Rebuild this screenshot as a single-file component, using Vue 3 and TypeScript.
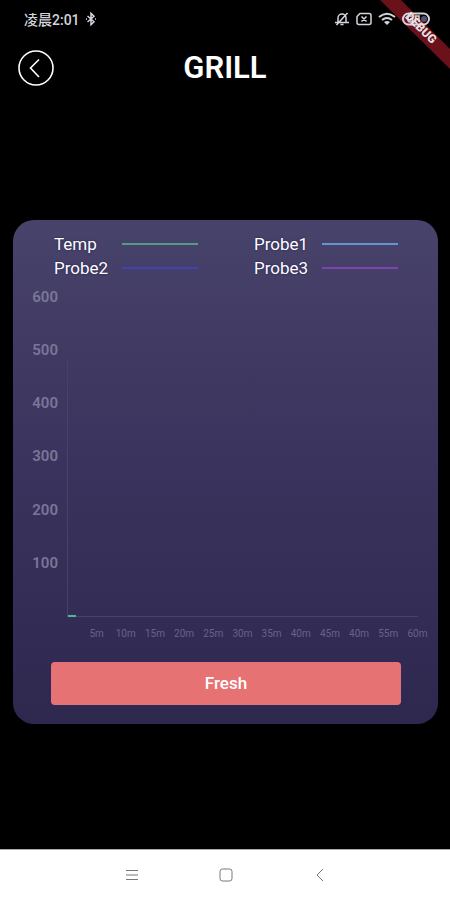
<script setup lang="ts">
interface Series {
  name: string
  tone: string
}

const series: Series[] = [
  { name: 'Temp', tone: 'green' },
  { name: 'Probe1', tone: 'sky' },
  { name: 'Probe2', tone: 'blue' },
  { name: 'Probe3', tone: 'purple' },
]

const temperatures: number[] = [600, 500, 400, 300, 200, 100]
const minutes: string[] = ['5m', '10m', '15m', '20m', '25m', '30m', '35m', '40m', '45m', '40m', '55m', '60m']
</script>

<template>
  <div class="screen">
    <svg class="ribbon" width="72" height="72" viewBox="0 0 72 72">
      <path d="M2 0h21l49 49v20z" />
    </svg>

    <div class="status">
      <div class="status-side time">
        <span>凌晨2:01</span>
        <svg width="12" height="14" viewBox="0 0 12 14">
          <path d="M2.500 4 9 9.700 6 12.700V1.300L9 4.300 2.500 10M1 7h1M10 7h1" />
        </svg>
      </div>
      <div class="status-side">
        <svg width="16" height="14" viewBox="0 0 16 14">
          <path d="M1 10.500h14M4 10V6a4 4 0 0 1 8 0v4M6.500 12.500h3M13.500 1 2.500 13" />
        </svg>
        <svg width="16" height="14" viewBox="0 0 16 14">
          <path d="M4 1.500h9a2 2 0 0 1 2 2v7a2 2 0 0 1-2 2H3a2 2 0 0 1-2-2V4.500zM5.500 4.500l5 5M10.500 4.500l-5 5" />
        </svg>
        <svg width="18" height="14" viewBox="0 0 18 14">
          <path class="wide" d="M1 5q8-6.500 16 0M4 8q5-4 10 0" />
          <path class="solid" d="M6 10q3-2 6 0l-3 3z" />
        </svg>
        <svg width="28" height="14" viewBox="0 0 28 14">
          <rect class="wide" x="1" y="1.500" width="26" height="11" rx="5.500" />
          <path d="M10.500 4H8A2 2 0 0 0 6 6v2a2 2 0 0 0 2 2h2.500V7H8M13.500 10V4h3.500v6M13.500 7H17" />
          <circle class="dot" cx="22" cy="7" r="3" />
        </svg>
      </div>
    </div>

    <svg class="ribbon" width="72" height="72" viewBox="0 0 72 72">
      <text x="43" y="28" transform="rotate(45 43 28)" text-anchor="middle" dominant-baseline="central">DEBUG</text>
    </svg>

    <header class="header">
      <button class="back" type="button" aria-label="Back">
        <svg width="36" height="36" viewBox="0 0 36 36">
          <circle cx="18" cy="18" r="17" />
          <path d="M21 9.500 12.500 18l8.500 9" />
        </svg>
      </button>
      <h1>GRILL</h1>
    </header>

    <main class="main">
      <section class="card">
        <ul class="legend">
          <li v-for="item in series" :key="item.name">
            <span class="name">{{ item.name }}</span>
            <span class="line" :class="item.tone"></span>
          </li>
        </ul>

        <div class="chart">
          <div class="y-axis">
            <span v-for="t in temperatures" :key="t">{{ t }}</span>
          </div>
          <div class="plot">
            <span class="reading"></span>
          </div>
        </div>
        <div class="x-axis">
          <span v-for="(m, i) in minutes" :key="i">{{ m }}</span>
        </div>

        <button class="fresh" type="button">Fresh</button>
      </section>
    </main>

    <nav class="nav">
      <button type="button" aria-label="Menu">
        <svg width="14" height="14" viewBox="0 0 14 14"><path d="M1 2.500h12M1 7h12M1 11.500h12" /></svg>
      </button>
      <button type="button" aria-label="Home">
        <svg width="14" height="14" viewBox="0 0 14 14"><rect x="1" y="1" width="12" height="12" rx="2.500" /></svg>
      </button>
      <button type="button" aria-label="Previous">
        <svg width="14" height="14" viewBox="0 0 14 14"><path d="M10 1 4 7l6 6" /></svg>
      </button>
    </nav>
  </div>
</template>

<style>
body {
  background: #000;
}
</style>

<style scoped>
.screen {
  position: relative;
  display: flex;
  flex-direction: column;
  min-height: 100vh;
  overflow: hidden;
  background: #000;
  color: #fff;
  font-family: Roboto, "Noto Sans CJK SC", sans-serif;
}

button {
  border: 0;
  padding: 0;
  background: none;
  color: inherit;
  font: inherit;
  cursor: pointer;
}

svg {
  display: block;
  fill: none;
  stroke: currentColor;
}

.status {
  position: relative;
  display: flex;
  justify-content: space-between;
  align-items: center;
  height: 38px;
  padding: 0 20px 0 24px;
  color: #d4d4dc;
  font-size: 14px;
  font-weight: 500;
}

.status-side {
  display: flex;
  align-items: center;
  gap: 6px;
}

.time {
  gap: 5px;
}

.status svg {
  stroke-width: 1.5;
}

.status .wide {
  stroke-width: 2;
}

.status .solid {
  fill: currentColor;
  stroke: none;
}

.status .dot {
  fill: #55516f;
  stroke: none;
}

.ribbon {
  position: absolute;
  top: 0;
  right: 0;
}

.ribbon path {
  fill: #6b1119;
  stroke: none;
}

.ribbon text {
  fill: #e6dfe2;
  stroke: none;
  font-size: 12px;
  font-weight: 900;
}

.header {
  display: grid;
  grid-template-columns: 36px 1fr 36px;
  align-items: center;
  height: 60px;
  padding: 0 18px;
}

.back svg {
  stroke-width: 1.6;
}

h1 {
  margin: 0;
  font-size: 31px;
  font-weight: 600;
  line-height: 36px;
  text-align: center;
}

.main {
  display: flex;
  flex: 1;
  align-items: center;
  padding: 0 12px 4px 13px;
}

.card {
  flex: 1;
  min-width: 0;
  padding-bottom: 18px;
  border-radius: 21px;
  background: linear-gradient(#48436a, #3b345e 45%, #2e274e);
}

.legend {
  display: grid;
  grid-template-columns: 1fr 1fr;
  column-gap: 56px;
  margin: 0;
  padding: 12px 40px 0 41px;
  list-style: none;
}

.legend li {
  display: flex;
  align-items: center;
  height: 24px;
}

.name {
  width: 68px;
  font-size: 17px;
  line-height: 24px;
  text-shadow: 0 0 2px #1d1a4c;
}

.line {
  flex: 1;
  height: 2px;
}

.green {
  background: #529b89;
}

.sky {
  background: #6496cb;
}

.blue {
  background: #3e45b0;
}

.purple {
  background: #7e43b0;
}

.chart {
  display: grid;
  grid-template-columns: 45px 1fr;
  column-gap: 9px;
  height: 328px;
  margin-top: 9px;
  padding-right: 20px;
}

.y-axis {
  display: grid;
  grid-template-rows: repeat(6, 1fr);
  padding-bottom: 8px;
  color: #7b7698;
  font-size: 15px;
  font-weight: 600;
  line-height: 16px;
  text-align: right;
}

.plot {
  display: flex;
  align-items: flex-end;
  margin-top: 70px;
  border: solid #48426b;
  border-width: 0 0 1px 1px;
}

.reading {
  width: 8px;
  height: 2px;
  margin-bottom: -1px;
  background: #4fb793;
}

.x-axis {
  display: grid;
  grid-template-columns: repeat(12, 1fr);
  margin-top: 9px;
  padding: 0 6px 0 69px;
  color: #69638a;
  font-size: 10px;
  line-height: 16px;
  text-align: center;
}

.fresh {
  display: block;
  width: calc(100% - 73px);
  height: 45px;
  margin: 19px 36px 0 37px;
  border: 1px solid #2a285f;
  border-radius: 4px;
  background: #e67274;
  background-clip: padding-box;
  font-size: 17px;
  font-weight: 500;
}

.nav {
  display: flex;
  justify-content: center;
  align-items: center;
  gap: 80px;
  height: 50px;
  padding-left: 2px;
  border-top: 1px solid #aaa;
  background: #fff;
  color: #777;
}

.nav button {
  display: grid;
  place-items: center;
  width: 14px;
  height: 40px;
}
</style>
